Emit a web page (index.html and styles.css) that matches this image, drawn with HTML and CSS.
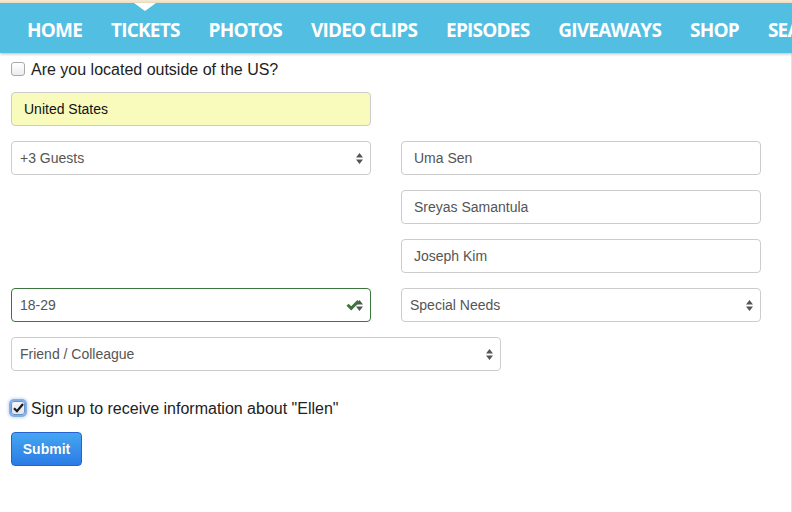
FILE: index.html
```html
<!DOCTYPE html>
<html>
<head>
<meta charset="utf-8">
<link rel="stylesheet" href="styles.css">
</head>
<body>
<div class="topstrip"></div>
<nav class="nav">
  <span class="pointer"></span>
  <a class="nav-item">HOME</a>
  <a class="nav-item">TICKETS</a>
  <a class="nav-item">PHOTOS</a>
  <a class="nav-item">VIDEO CLIPS</a>
  <a class="nav-item">EPISODES</a>
  <a class="nav-item">GIVEAWAYS</a>
  <a class="nav-item">SHOP</a>
  <a class="nav-item">SEARCH</a>
</nav>
<main class="page">
  <label class="check-row">
    <span class="cb"></span>
    <span>Are you located outside of the US?</span>
  </label>

  <div class="grid">
    <div class="field"><div class="control autofill">United States</div></div>
    <div></div>

    <div class="field">
      <div class="control select">+3 Guests
        <svg class="arrows" width="7" height="11" viewBox="0 0 7 11"><path d="M3.5 0L7 4.5H0z M0 6.5H7L3.5 11z" fill="#555"/></svg>
      </div>
    </div>
    <div class="stack">
      <div class="control">Uma Sen</div>
      <div class="control">Sreyas Samantula</div>
      <div class="control">Joseph Kim</div>
    </div>

    <div class="field">
      <div class="control select valid">18-29
        <svg class="arrows" width="7" height="11" viewBox="0 0 7 11"><path d="M3.5 0L7 4.5H0z M0 6.5H7L3.5 11z" fill="#555"/></svg>
        <svg class="ok" width="14" height="11" viewBox="0 0 14 11"><path d="M0.5 5.8L2.6 3.7L5.2 6.3L11.4 0.1L13.5 2.2L5.2 10.5z" fill="#3c763d"/></svg>
      </div>
    </div>
    <div class="field">
      <div class="control select">Special Needs
        <svg class="arrows" width="7" height="11" viewBox="0 0 7 11"><path d="M3.5 0L7 4.5H0z M0 6.5H7L3.5 11z" fill="#555"/></svg>
      </div>
    </div>
  </div>

  <div class="field wide">
    <div class="control select">Friend / Colleague
      <svg class="arrows" width="7" height="11" viewBox="0 0 7 11"><path d="M3.5 0L7 4.5H0z M0 6.5H7L3.5 11z" fill="#555"/></svg>
    </div>
  </div>

  <label class="check-row signup">
    <span class="cb checked">
      <svg width="11" height="10" viewBox="0 0 11 10"><path d="M1 5.2L4 8.2L10 1" fill="none" stroke="#1a1a1a" stroke-width="2.2"/></svg>
    </span>
    <span>Sign up to receive information about "Ellen"</span>
  </label>

  <button class="submit">Submit</button>
</main>
</body>
</html>
```

FILE: styles.css
```css
html, body {
  margin: 0;
  padding: 0;
  background: #fff;
}
body {
  font-family: "Liberation Sans", Arial, sans-serif;
  color: #333;
  width: 792px;
  height: 512px;
  overflow: hidden;
}
.topstrip {
  height: 3px;
  background: #f4e7cd;
}
.nav {
  position: relative;
  height: 50px;
  background: #52bee2;
  box-shadow: 0 1px 3px rgba(0, 0, 0, 0.28);
  display: flex;
  align-items: center;
  padding-left: 27px;
  gap: 29px;
  white-space: nowrap;
  overflow: hidden;
  z-index: 2;
}
.pointer {
  position: absolute;
  left: 134px;
  top: 0;
  width: 0;
  height: 0;
  border-left: 11px solid transparent;
  border-right: 11px solid transparent;
  border-top: 8px solid #fff;
}
.nav-item {
  font-family: "Open Sans", sans-serif;
  font-weight: 700;
  font-size: 19px;
  letter-spacing: -0.8px;
  color: #fff;
  padding-top: 3px;
}
.page {
  position: relative;
  padding: 6px 0 0 11px;
  height: 453px;
  width: 780px;
  border-right: 1px solid #e3e3e3;
}
.check-row {
  display: flex;
  align-items: center;
  gap: 6px;
  font-size: 16px;
  color: #222;
  height: 20px;
}
.check-row > span:last-child {
  padding-top: 2px;
}
.cb {
  width: 12px;
  height: 12px;
  border: 1px solid #a9a9a9;
  border-radius: 3px;
  background: linear-gradient(#fff, #ececec);
  display: flex;
  align-items: center;
  justify-content: center;
}
.cb.checked {
  border-color: #6b8fc7;
  box-shadow: 0 0 0 2px rgba(80, 140, 220, 0.6), 0 0 3px 3px rgba(80, 140, 220, 0.3);
  background: linear-gradient(#f4f7fb, #dfe6f0);
}
.grid {
  margin-top: 13px;
  display: grid;
  grid-template-columns: 360px 360px;
  column-gap: 30px;
  row-gap: 15px;
  width: 750px;
  align-items: start;
}
.stack {
  display: flex;
  flex-direction: column;
  gap: 15px;
}
.field {
  position: relative;
}
.control {
  position: relative;
  box-sizing: border-box;
  height: 34px;
  border: 1px solid #ccc;
  border-radius: 4px;
  background: #fff;
  font-size: 14px;
  color: #555;
  line-height: 32px;
  padding-left: 12px;
}
.control.select {
  padding-left: 8px;
}
.control.autofill {
  background: #f9fbbd;
  color: #111;
}
.control.valid {
  border-color: #3c763d;
}
.arrows {
  position: absolute;
  right: 7px;
  top: 11px;
}
.ok {
  position: absolute;
  right: 10px;
  top: 11px;
}
.wide {
  width: 490px;
  margin-top: 15px;
}
.signup {
  margin-top: 27px;
}
.submit {
  display: block;
  margin-top: 14px;
  width: 71px;
  height: 34px;
  border: 1px solid #2463d0;
  border-radius: 4px;
  background: linear-gradient(#45a6f2, #2b7be4);
  color: #fff;
  font-family: "Liberation Sans", Arial, sans-serif;
  font-weight: 700;
  font-size: 14px;
  padding: 0;
  text-shadow: 0 0 1px rgba(0, 0, 0, 0.2);
}
```
